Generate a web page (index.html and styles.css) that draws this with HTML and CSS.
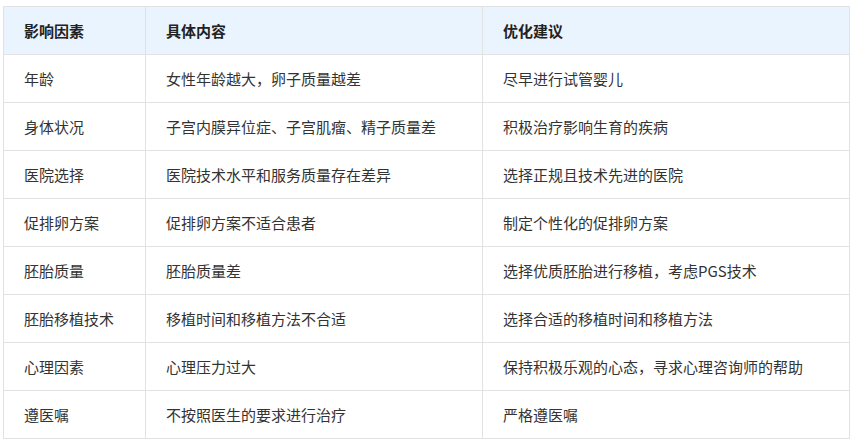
FILE: index.html
```html
<!DOCTYPE html>
<html lang="zh">
<head>
<meta charset="utf-8">
<link rel="stylesheet" href="styles.css">
</head>
<body>
<table class="tbl">
  <colgroup>
    <col class="c1"><col class="c2"><col class="c3">
  </colgroup>
  <thead>
    <tr><th>影响因素</th><th>具体内容</th><th>优化建议</th></tr>
  </thead>
  <tbody>
    <tr><td>年龄</td><td>女性年龄越大，卵子质量越差</td><td>尽早进行试管婴儿</td></tr>
    <tr><td>身体状况</td><td>子宫内膜异位症、子宫肌瘤、精子质量差</td><td>积极治疗影响生育的疾病</td></tr>
    <tr><td>医院选择</td><td>医院技术水平和服务质量存在差异</td><td>选择正规且技术先进的医院</td></tr>
    <tr><td>促排卵方案</td><td>促排卵方案不适合患者</td><td>制定个性化的促排卵方案</td></tr>
    <tr><td>胚胎质量</td><td>胚胎质量差</td><td>选择优质胚胎进行移植，考虑PGS技术</td></tr>
    <tr><td>胚胎移植技术</td><td>移植时间和移植方法不合适</td><td>选择合适的移植时间和移植方法</td></tr>
    <tr><td>心理因素</td><td>心理压力过大</td><td>保持积极乐观的心态，寻求心理咨询师的帮助</td></tr>
    <tr><td>遵医嘱</td><td>不按照医生的要求进行治疗</td><td>严格遵医嘱</td></tr>
  </tbody>
</table>
</body>
</html>
```

FILE: styles.css
```css
html, body {
  margin: 0;
  padding: 0;
  background: #ffffff;
}
body {
  padding: 6px 0 0 3px;
  font-family: "Noto Sans CJK SC", "Noto Sans", sans-serif;
  font-size: 15px;
  color: #333333;
}
.tbl {
  border-collapse: collapse;
  table-layout: fixed;
  width: 846px;
}
.c1 { width: 142px; }
.c2 { width: 337px; }
.c3 { width: 367px; }
.tbl th, .tbl td {
  border: 1px solid #e2e2e2;
  height: 48px;
  padding: 0 20px;
  text-align: left;
  vertical-align: middle;
  box-sizing: border-box;
  line-height: 20px;
  white-space: nowrap;
}
.tbl th {
  background: #eaf4fe;
  font-weight: bold;
  color: #222222;
}
```
